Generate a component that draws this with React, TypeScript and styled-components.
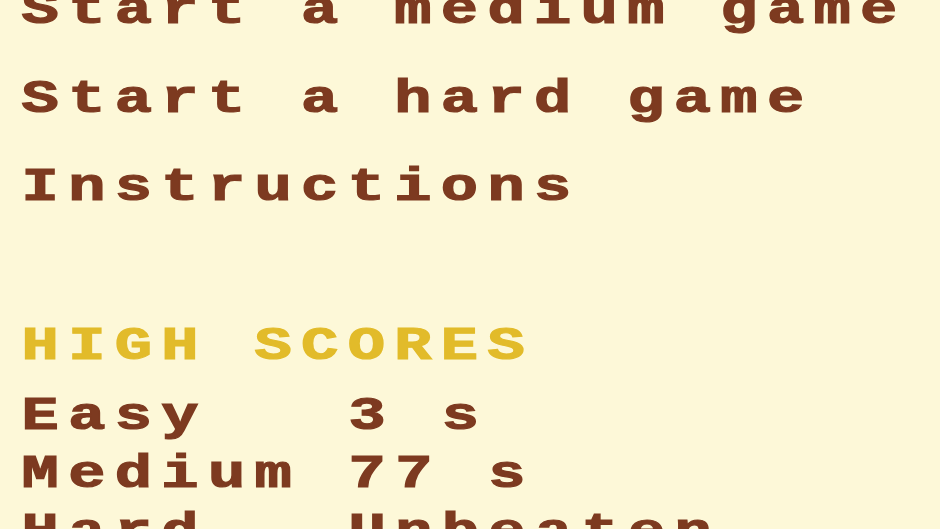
import React from "react";
import styled, { createGlobalStyle } from "styled-components";

const GlobalStyle = createGlobalStyle`
  html, body {
    margin: 0;
    padding: 0;
    background: #fdf8d8;
    overflow: hidden;
  }
  body {
    font-family: "Liberation Mono", "DejaVu Sans Mono", monospace;
  }
`;

const Screen = styled.div`
  width: 940px;
  height: 529px;
  overflow: hidden;
  background: #fdf8d8;
`;

/* Chunky, wide letters in the spirit of a pixel font */
const Content = styled.div`
  margin-top: -33px;
  padding-left: 16px;
  display: flex;
  flex-direction: column;
  font-size: 46px;
  font-weight: 700;
  letter-spacing: 6.9px;
  color: #7d3a20;
  -webkit-text-stroke: 1.2px currentColor;
  transform: scaleX(1.35);
  transform-origin: 0 0;
`;

const Menu = styled.nav`
  display: flex;
  flex-direction: column;
`;

const MenuItem = styled.div`
  line-height: 88.5px;
  white-space: pre;
  cursor: pointer;
`;

const Scores = styled.section`
  margin-top: 85px;
  display: flex;
  flex-direction: column;
`;

const Heading = styled.div`
  line-height: 58px;
  margin-bottom: 12px;
  color: #e2bb2a;
  white-space: pre;
`;

const ScoreRow = styled.div`
  display: grid;
  grid-template-columns: 242.2px auto;
  line-height: 58px;
  white-space: pre;
`;

const menu = ["Start a medium game", "Start a hard game", "Instructions"];

const scores: [string, string][] = [
  ["Easy", "3 s"],
  ["Medium", "77 s"],
  ["Hard", "Unbeaten"],
];

export default function App() {
  return (
    <Screen>
      <GlobalStyle />
      <Content>
        <Menu>
          {menu.map((m) => (
            <MenuItem key={m}>{m}</MenuItem>
          ))}
        </Menu>
        <Scores>
          <Heading>HIGH SCORES</Heading>
          {scores.map(([level, time]) => (
            <ScoreRow key={level}>
              <span>{level}</span>
              <span>{time}</span>
            </ScoreRow>
          ))}
        </Scores>
      </Content>
    </Screen>
  );
}
